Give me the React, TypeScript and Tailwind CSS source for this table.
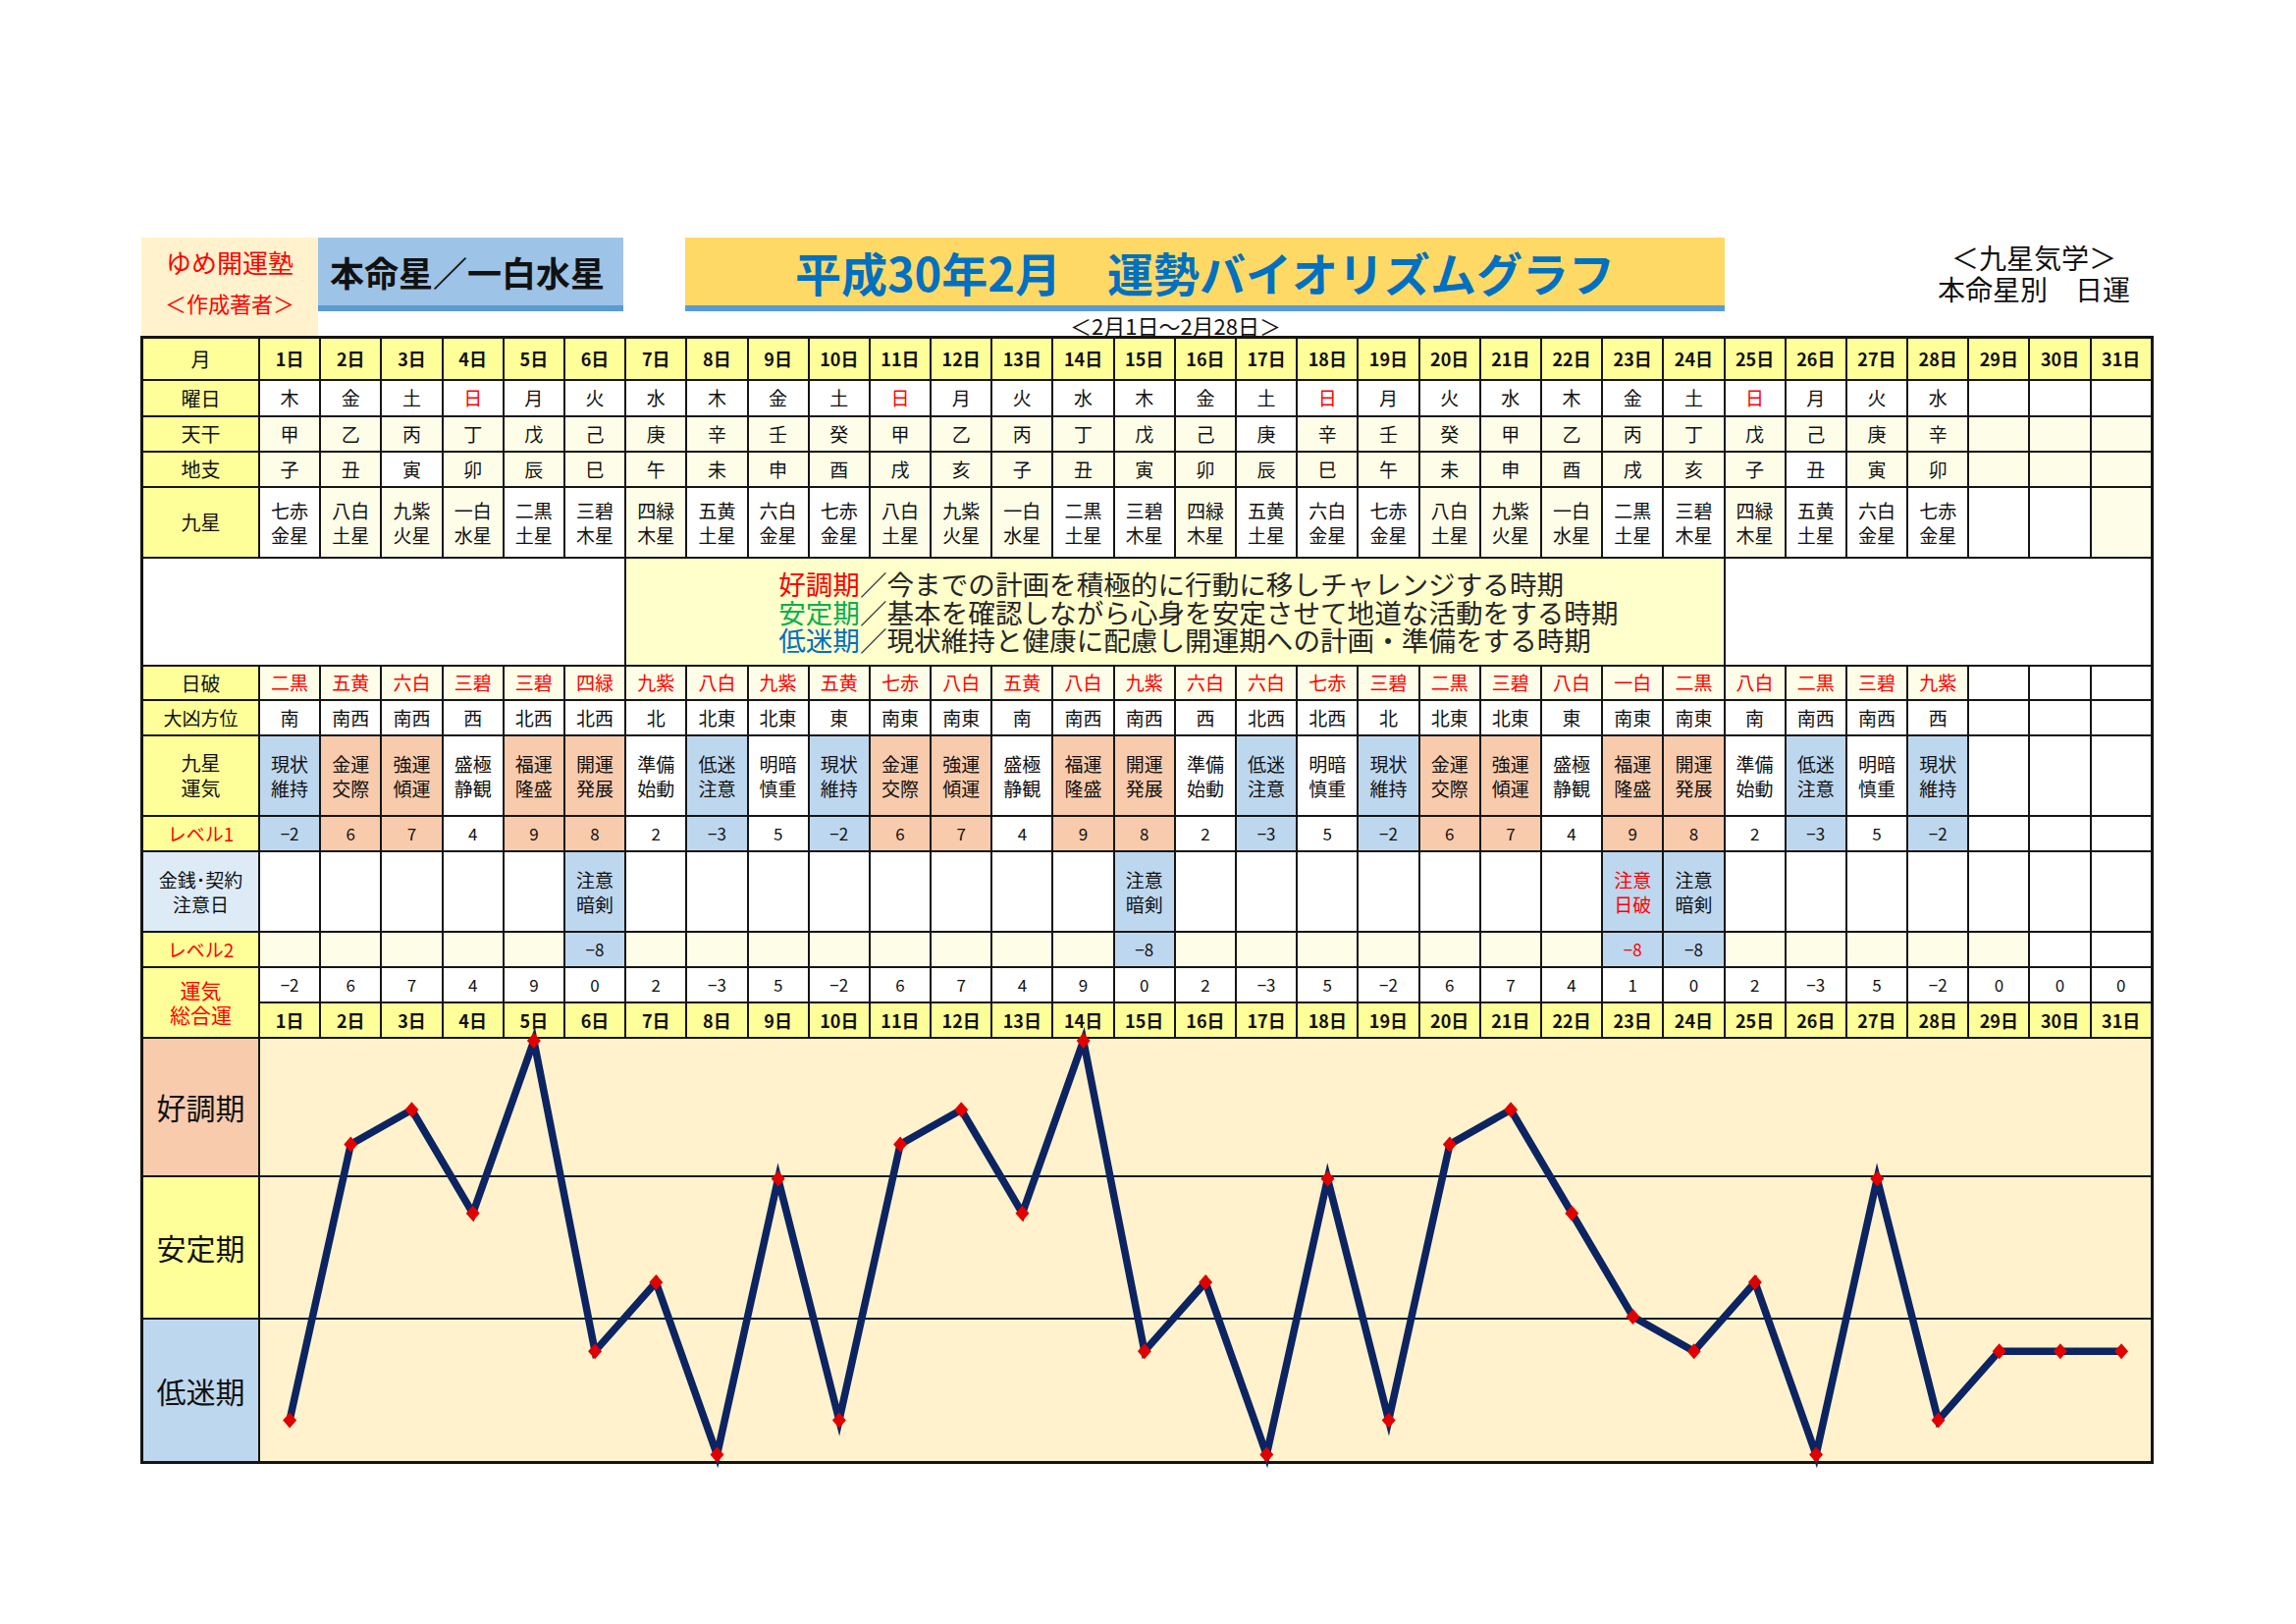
import React from "react";

const FONT = { fontFamily: '"Noto Sans CJK JP", "Noto Sans", sans-serif' };

const days = Array.from({ length: 31 }, (_, i) => i + 1);
const youbi = "木金土日月火水木金土日月火水木金土日月火水木金土日月火水".split("");
const tenkan = "甲乙丙丁戊己庚辛壬癸".split("");
const chishi = "子丑寅卯辰巳午未申酉戌亥".split("");
const stars = ["一白水星", "二黒土星", "三碧木星", "四緑木星", "五黄土星", "六白金星", "七赤金星", "八白土星", "九紫火星"];
const nippa = ["二黒", "五黄", "六白", "三碧", "三碧", "四緑", "九紫", "八白", "九紫", "五黄", "七赤", "八白", "五黄", "八白", "九紫", "六白", "六白", "七赤", "三碧", "二黒", "三碧", "八白", "一白", "二黒", "八白", "二黒", "三碧", "九紫"];
const hou = ["南", "南西", "南西", "西", "北西", "北西", "北", "北東", "北東", "東", "南東", "南東", "南", "南西", "南西", "西", "北西", "北西", "北", "北東", "北東", "東", "南東", "南東", "南", "南西", "南西", "西"];
const unki = ["現状維持", "金運交際", "強運傾運", "盛極静観", "福運隆盛", "開運発展", "準備始動", "低迷注意", "明暗慎重"];
const lv1 = [-2, 6, 7, 4, 9, 8, 2, -3, 5];
const kind = ["b", "o", "o", "w", "o", "o", "w", "b", "w"];
const total = [-2, 6, 7, 4, 9, 0, 2, -3, 5, -2, 6, 7, 4, 9, 0, 2, -3, 5, -2, 6, 7, 4, 1, 0, 2, -3, 5, -2, 0, 0, 0];
const creamStars = ["八白土星", "九紫火星", "一白水星", "四緑木星"];

const fmt = (v: number) => (v < 0 ? "−" + -v : String(v));
const kindBg = (k: string) => (k === "b" ? "bg-[#bdd7ee]" : k === "o" ? "bg-[#f8cbad]" : "bg-white");

function C({ children, className = "" }: { children?: React.ReactNode; className?: string }) {
  return <div className={"flex items-center justify-center text-center " + className}>{children}</div>;
}

function Two({ s }: { s: string }) {
  return (
    <div className="leading-[25px]">
      {s.slice(0, 2)}
      <br />
      {s.slice(2)}
    </div>
  );
}

const PITCH = 62.2;
const CW = 31 * 60.2 + 30 * 2;
const CH = 430;
const yOf = (v: number) => 2 + (9 - v) * 35.13;
const xOf = (i: number) => i * PITCH + 30.1;

export default function App() {
  const pts = total.map((v, i) => [xOf(i), yOf(v)]);
  return (
    <div className="w-[2339px] h-[1654px] bg-white text-[#111]" style={FONT}>
      {/* header */}
      <div className="flex items-start pl-[144px] pt-[242px]">
        <div className="w-[180px] h-[100px] bg-[#fff2cc] flex flex-col items-center text-[#ff0000]">
          <div className="text-[26px] leading-[30px] mt-[10px]">ゆめ開運塾</div>
          <div className="text-[22px] leading-[26px] mt-[13px]">＜作成著者＞</div>
        </div>
        <div className="w-[311px] h-[75px] bg-[#9dc3e6] border-b-[6px] border-[#5b9bd5] flex items-center pl-[12px] text-[35px] font-bold leading-none">
          本命星／一白水星
        </div>
        <div className="ml-[63px] w-[1059px] flex flex-col">
          <div className="h-[75px] bg-[#ffd966] border-b-[6px] border-[#5b9bd5] flex items-center justify-center text-[#0070c0] text-[47px] font-bold leading-none">
            平成30年2月　運勢バイオリズムグラフ
          </div>
          <div className="text-[22px] leading-[22px] mt-[3px] text-center pr-[60px]">＜2月1日～2月28日＞</div>
        </div>
        <div className="ml-[200px] w-[230px] flex flex-col items-center text-[28px] leading-[32px] mt-[4px]">
          <div>＜九星気学＞</div>
          <div>本命星別　日運</div>
        </div>
      </div>

      {/* table */}
      <div className="ml-[143px] w-max grid gap-[2px] bg-[#151515] p-[3px] grid-cols-[117px_repeat(31,60.2px)] grid-rows-[41px_35px_34px_34px_70px_108px_33px_34px_80px_34px_80px_34px_34px_34px_430px] text-[19px]">
        {/* 月 row */}
        <C className="bg-[#ffff99] text-[20px]">月</C>
        {days.map((d) => (
          <C key={"h" + d} className="bg-[#ffff99] font-bold text-[18px]">{d}日</C>
        ))}
        {/* 曜日 */}
        <C className="bg-[#ffff99] text-[20px]">曜日</C>
        {days.map((d) => (
          <C key={"y" + d} className={"bg-white " + (youbi[d - 1] === "日" ? "text-[#ff0000]" : "")}>{d <= 28 ? youbi[d - 1] : ""}</C>
        ))}
        {/* 天干 */}
        <C className="bg-[#ffff99] text-[20px]">天干</C>
        {days.map((d) => (
          <C key={"t" + d} className={d === 17 ? "bg-white" : "bg-[#fefee8]"}>{d <= 28 ? tenkan[(d - 1) % 10] : ""}</C>
        ))}
        {/* 地支 */}
        <C className="bg-[#ffff99] text-[20px]">地支</C>
        {days.map((d) => (
          <C key={"c" + d} className={d === 3 || d === 26 ? "bg-white" : "bg-[#fefee8]"}>{d <= 28 ? chishi[(d - 1) % 12] : ""}</C>
        ))}
        {/* 九星 */}
        <C className="bg-[#ffff99] text-[20px]">九星</C>
        {days.map((d) => {
          const s = d <= 28 ? stars[(6 + d - 1) % 9] : "";
          const cream = creamStars.includes(s) || d === 31;
          return (
            <C key={"k" + d} className={cream ? "bg-[#fefee8]" : "bg-white"}>
              {s ? <Two s={s} /> : null}
            </C>
          );
        })}
        {/* text row */}
        <div className="col-span-7 bg-white" />
        <div className="col-span-18 bg-[#ffffcc] flex flex-col justify-center pl-[155px] text-[27.6px] leading-[28.5px] text-[#262626] whitespace-nowrap">
          <div><span className="text-[#ff0000]">好調期</span>／今までの計画を積極的に行動に移しチャレンジする時期</div>
          <div><span className="text-[#00b050]">安定期</span>／基本を確認しながら心身を安定させて地道な活動をする時期</div>
          <div><span className="text-[#0070c0]">低迷期</span>／現状維持と健康に配慮し開運期への計画・準備をする時期</div>
        </div>
        <div className="col-span-7 bg-white" />
        {/* 日破 */}
        <C className="bg-[#ffff99] text-[20px]">日破</C>
        {days.map((d) => (
          <C key={"n" + d} className={"text-[#ff0000] " + (d <= 28 ? "bg-[#fefee8]" : "bg-white")}>{d <= 28 ? nippa[d - 1] : ""}</C>
        ))}
        {/* 大凶方位 */}
        <C className="bg-[#ffff99] text-[19px]">大凶方位</C>
        {days.map((d) => (
          <C key={"f" + d} className="bg-white">{d <= 28 ? hou[d - 1] : ""}</C>
        ))}
        {/* 九星運気 */}
        <C className="bg-[#ffff99] text-[20px]">
          <div className="leading-[26px]">九星<br />運気</div>
        </C>
        {days.map((d) => {
          const i = (d - 1) % 9;
          return (
            <C key={"u" + d} className={d <= 28 ? kindBg(kind[i]) : "bg-white"}>
              {d <= 28 ? <Two s={unki[i]} /> : null}
            </C>
          );
        })}
        {/* レベル1 */}
        <C className="bg-[#ffff99] text-[#ff0000] text-[19px]">レベル1</C>
        {days.map((d) => {
          const i = (d - 1) % 9;
          return (
            <C key={"l" + d} className={"text-[17px] " + (d <= 28 ? kindBg(kind[i]) : "bg-white")}>
              {d <= 28 ? fmt(lv1[i]) : ""}
            </C>
          );
        })}
        {/* 金銭・契約 */}
        <C className="bg-[#ddebf7] text-[19px]">
          <div className="leading-[25px]">金銭･契約<br />注意日</div>
        </C>
        {days.map((d) => {
          const mark = d === 6 || d === 15 || d === 24;
          const red = d === 23;
          return (
            <C key={"m" + d} className={mark || red ? "bg-[#bdd7ee]" : "bg-white"}>
              {mark ? <Two s="注意暗剣" /> : red ? <div className="text-[#ff0000]"><Two s="注意日破" /></div> : null}
            </C>
          );
        })}
        {/* レベル2 */}
        <C className="bg-[#ffff99] text-[#ff0000] text-[19px]">レベル2</C>
        {days.map((d) => {
          const mark = d === 6 || d === 15 || d === 24 || d === 23;
          return (
            <C key={"v" + d} className={"text-[17px] " + (mark ? "bg-[#bdd7ee]" : d <= 29 ? "bg-[#fefee8]" : "bg-white") + (d === 23 ? " text-[#ff0000]" : "")}>
              {mark ? "−8" : ""}
            </C>
          );
        })}
        {/* 運気総合運 */}
        <C className="row-span-2 bg-[#ffff99] text-[#ff0000] text-[21px]">
          <div className="leading-[25px]">運気<br />総合運</div>
        </C>
        {days.map((d) => (
          <C key={"s" + d} className="bg-white text-[17px]">{fmt(total[d - 1])}</C>
        ))}
        {days.map((d) => (
          <C key={"d" + d} className="bg-[#ffff99] font-bold text-[18px]">{d}日</C>
        ))}
        {/* chart */}
        <div className="flex flex-col gap-[2px] text-[30px]">
          <C className="h-[139px] bg-[#f8cbad]">好調期</C>
          <C className="h-[143px] bg-[#ffff99]">安定期</C>
          <C className="h-[144px] bg-[#bdd7ee]">低迷期</C>
        </div>
        <div className="col-span-31 relative bg-[#fff2cc]">
          <svg className="absolute left-0 top-0 overflow-visible" width={CW} height={CH} viewBox={`0 0 ${CW} ${CH}`}>
            <line x1={0} x2={CW} y1={140} y2={140} stroke="#1a1a1a" strokeWidth={2} />
            <line x1={0} x2={CW} y1={285} y2={285} stroke="#1a1a1a" strokeWidth={2} />
            <polyline
              points={pts.map((p) => p.join(",")).join(" ")}
              fill="none"
              stroke="#0c2461"
              strokeWidth={7.5}
              strokeLinejoin="miter"
              strokeMiterlimit={10}
            />
            {pts.map(([x, y], i) => (
              <polygon key={i} points={`${x},${y - 8} ${x + 7},${y} ${x},${y + 8} ${x - 7},${y}`} fill="#e00000" />
            ))}
          </svg>
        </div>
      </div>
    </div>
  );
}
